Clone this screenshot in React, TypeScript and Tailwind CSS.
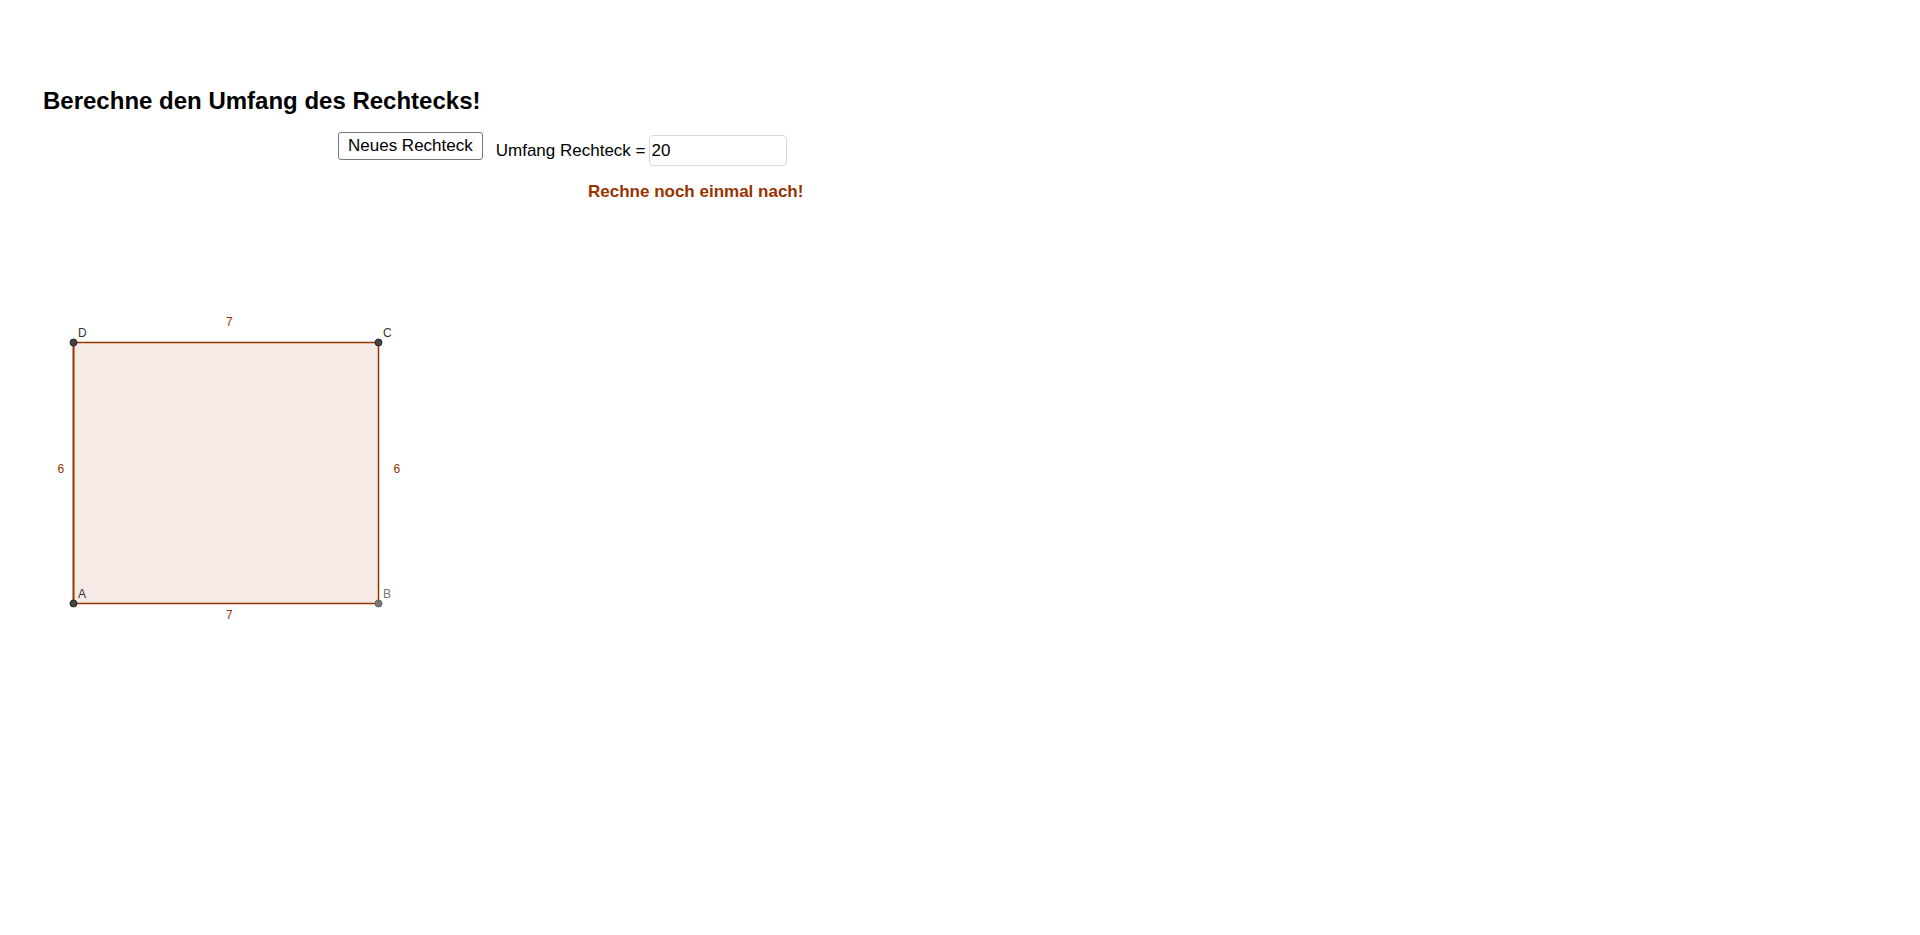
const brown = '#993300'

function Rectangle() {
  return (
    <svg width="440" height="330" viewBox="0 0 440 330" className="block">
      <rect x="73.5" y="40.5" width="305" height="261" fill={brown} fillOpacity={0.1} />
      <line x1="73.5" y1="40.5" x2="378.5" y2="40.5" stroke={brown} strokeWidth={1.5} />
      <line x1="378.5" y1="40.5" x2="378.5" y2="301.5" stroke={brown} strokeWidth={1.5} />
      <line x1="73.5" y1="301.5" x2="378.5" y2="301.5" stroke={brown} strokeWidth={1.5} />
      <line x1="73.5" y1="40.5" x2="73.5" y2="301.5" stroke={brown} strokeWidth={2} />

      <g fontFamily="'Liberation Sans', Arial, sans-serif" fontSize="12">
        <text x="226" y="24" fill={brown}>7</text>
        <text x="226" y="317" fill={brown}>7</text>
        <text x="57.5" y="171" fill={brown}>6</text>
        <text x="393.5" y="171" fill={brown}>6</text>

        <text x="78" y="35" fill="#333">D</text>
        <text x="383" y="35" fill="#333">C</text>
        <text x="78" y="296" fill="#333">A</text>
        <text x="383" y="296" fill="#777">B</text>
      </g>

      <circle cx="73.5" cy="40.5" r="3.5" fill="#444" stroke="#111" strokeWidth={0.8} />
      <circle cx="378.5" cy="40.5" r="3.5" fill="#444" stroke="#111" strokeWidth={0.8} />
      <circle cx="73.5" cy="301.5" r="3.5" fill="#444" stroke="#111" strokeWidth={0.8} />
      <circle cx="378.5" cy="301.5" r="3.5" fill="#777" stroke="#555" strokeWidth={0.8} />
    </svg>
  )
}

export default function App() {
  return (
    <div className="h-[935px] w-full overflow-hidden bg-white font-['Liberation_Sans',Arial,sans-serif] text-black">
      <h1 className="pl-[43px] pt-[87px] text-[24px] font-bold leading-[28px]">Berechne den Umfang des Rechtecks!</h1>

      <div className="ml-[338px] mt-[17px] flex items-start">
        <button className="h-[28px] rounded-[3px] border border-[#767676] bg-white px-[9px] text-[17px] leading-[20px] text-black">
          Neues Rechteck
        </button>
        <span className="ml-[13px] mt-[9px] text-[17px] leading-[20px]">Umfang Rechteck =</span>
        <input
          defaultValue="20"
          className="ml-[3px] mt-[3px] h-[31px] w-[138px] rounded-[4px] border border-[#d9d9d9] bg-white pl-[2px] text-[17px] text-black outline-none"
        />
      </div>

      <p className="ml-[588px] mt-[16px] text-[17px] font-bold leading-[20px] text-[#993300]">Rechne noch einmal nach!</p>

      <div className="mt-[100px]">
        <Rectangle />
      </div>
    </div>
  )
}
